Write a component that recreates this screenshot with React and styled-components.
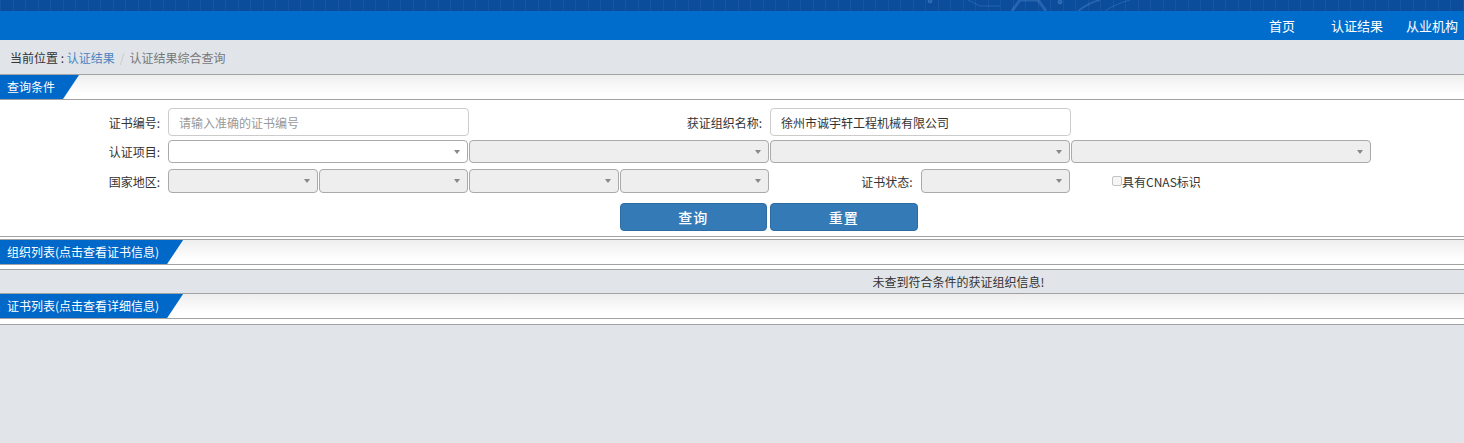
import React from 'react';
import styled, { createGlobalStyle } from 'styled-components';

const GlobalStyle = createGlobalStyle`
  html, body {
    margin: 0;
    padding: 0;
    background: #e1e5e9;
  }
  body {
    font-family: "Noto Sans CJK SC", "Noto Sans", sans-serif;
    font-size: 12px;
    color: #333;
  }
  * {
    box-sizing: border-box;
  }
`;

const Page = styled.div`
    width: 1464px;
    min-height: 443px;
    background: #e1e5e9;
`;

const TopStrip = styled.div`
    height: 11px;
    background-color: #0b4c9b;
    background-image: repeating-linear-gradient(
        90deg,
        rgba(255, 255, 255, 0.05) 0px,
        rgba(255, 255, 255, 0.05) 1px,
        transparent 1px,
        transparent 12.5px
    );
    overflow: hidden;

    svg {
        display: block;
    }
`;

const NavBar = styled.div`
    height: 29px;
    background: #006dcc;
    display: flex;
    justify-content: flex-end;
    align-items: center;
    gap: 23px;
    padding-right: 6px;
`;

const NavLink = styled.a`
    min-width: 52px;
    text-align: center;
    color: #fff;
    font-size: 13px;
    line-height: 29px;
    text-decoration: none;
`;

const Breadcrumb = styled.div`
    height: 34px;
    display: flex;
    align-items: center;
    padding-left: 10px;
    font-size: 12px;
`;

const CrumbLabel = styled.span`
    color: #333;
`;

const CrumbLink = styled.a`
    color: #4a85c3;
    text-decoration: none;
`;

const CrumbSep = styled.span`
    color: #c8c8c8;
    padding: 0 5px;
`;

const CrumbCurrent = styled.span`
    color: #777;
`;

const SectionHeader = styled.div`
    height: 26px;
    border-top: 1px solid #a2a2a2;
    border-bottom: 1px solid #a2a2a2;
    background: linear-gradient(#eeeeee, #ffffff 80%);
    display: flex;
`;

const Tag = styled.div`
    height: 24px;
    line-height: 24px;
    padding: 0 24px 0 7px;
    background: #0068c9;
    color: #fff;
    font-size: 12px;
    clip-path: polygon(0 0, 100% 0, calc(100% - 16px) 100%, 0 100%);
`;

const Spacer = styled.div`
    height: ${p => p.$h}px;
    background: #fff;
    border-bottom: ${p => (p.$line ? '1px solid #a2a2a2' : 'none')};
    box-sizing: content-box;
`;

const FormBody = styled.div`
    background: #fff;
    padding: 8px 0 5px;
    border-bottom: 1px solid #a2a2a2;
`;

const FormRow = styled.div`
    display: grid;
    grid-template-columns: 168px repeat(8, 150.5px);
    height: ${p => p.$h}px;
    margin-top: ${p => p.$mt || 0}px;
`;

const Label = styled.div`
    grid-column: span ${p => p.$span || 1};
    display: flex;
    align-items: center;
    justify-content: flex-end;
    padding-right: 8px;
    color: #333;
    font-size: 12px;
`;

const Blank = styled.div`
    grid-column: span ${p => p.$span || 1};
`;

const TextInput = styled.input`
    grid-column: span 2;
    height: 28px;
    border: 1px solid #ccc;
    border-radius: 4px;
    padding: 0 10px;
    font-family: inherit;
    font-size: 12px;
    color: #333;
    background: #fff;
    outline: none;

    &::placeholder {
        color: #999;
    }
`;

const SelectBox = styled.div`
    grid-column: span ${p => p.$span || 1};
    margin-right: 1px;
    border: 1px solid #aaa;
    border-radius: 4px;
    background: ${p => (p.$disabled ? '#eee' : '#fff')};
    display: flex;
    align-items: center;
    justify-content: flex-end;
    padding-right: 7px;
`;

const Arrow = styled.span`
    width: 0;
    height: 0;
    border-left: 3.5px solid transparent;
    border-right: 3.5px solid transparent;
    border-top: 4px solid #888;
`;

const CheckWrap = styled.label`
    display: flex;
    align-items: center;
    padding-left: 41px;
    font-size: 12px;
    color: #333;
    white-space: nowrap;
`;

const CheckBox = styled.span`
    width: 10px;
    height: 10px;
    border: 1px solid #c4c4c4;
    border-radius: 2px;
    background: #f6f6f6;
`;

const Button = styled.button`
    margin-right: 3px;
    height: 28px;
    background: #337ab7;
    border: 1px solid #2e6da4;
    border-radius: 4px;
    color: #fff;
    font-family: inherit;
    font-size: 14px;
    font-weight: 500;
    letter-spacing: 1px;
    cursor: pointer;
`;

const MessageRow = styled.div`
    height: 23px;
    line-height: 23px;
    padding-left: 453px;
    text-align: center;
    color: #333;
    font-size: 12px;
`;

function Select({ span, disabled }) {
    return (
        <SelectBox $span={span} $disabled={disabled}>
            <Arrow />
        </SelectBox>
    );
}

export default function App() {
    return (
        <Page>
            <GlobalStyle />
            <TopStrip>
                <svg width="1464" height="11" viewBox="0 0 1464 11">
                    <g fill="none" stroke="rgba(120,170,230,0.25)" strokeWidth="1">
                        <circle cx="930" cy="1" r="2" fill="rgba(120,170,230,0.25)" />
                        <path d="M968 0 L980 6 L1000 6" />
                        <path d="M1012 11 L1020 0 L1038 0 L1046 11" strokeWidth="3" />
                        <circle cx="1060" cy="2" r="2" fill="rgba(120,170,230,0.25)" />
                        <path d="M1078 11 Q1090 2 1100 0" strokeWidth="2" />
                        <path d="M1105 11 Q1115 4 1130 0" />
                    </g>
                </svg>
            </TopStrip>
            <NavBar>
                <NavLink>首页</NavLink>
                <NavLink>认证结果</NavLink>
                <NavLink>从业机构</NavLink>
            </NavBar>
            <Breadcrumb>
                <CrumbLabel>当前位置 :&nbsp;</CrumbLabel>
                <CrumbLink>认证结果</CrumbLink>
                <CrumbSep>/</CrumbSep>
                <CrumbCurrent>认证结果综合查询</CrumbCurrent>
            </Breadcrumb>

            <SectionHeader>
                <Tag>查询条件</Tag>
            </SectionHeader>
            <FormBody>
                <FormRow $h={28}>
                    <Label>证书编号:</Label>
                    <TextInput placeholder="请输入准确的证书编号" />
                    <Label $span={2}>获证组织名称:</Label>
                    <TextInput defaultValue="徐州市诚宇轩工程机械有限公司" />
                </FormRow>
                <FormRow $h={23} $mt={4}>
                    <Label>认证项目:</Label>
                    <Select span={2} />
                    <Select span={2} disabled />
                    <Select span={2} disabled />
                    <Select span={2} disabled />
                </FormRow>
                <FormRow $h={24} $mt={6}>
                    <Label>国家地区:</Label>
                    <Select disabled />
                    <Select disabled />
                    <Select disabled />
                    <Select disabled />
                    <Label>证书状态:</Label>
                    <Select disabled />
                    <CheckWrap>
                        <CheckBox />
                        具有CNAS标识
                    </CheckWrap>
                </FormRow>
                <FormRow $h={28} $mt={10}>
                    <Blank $span={4} />
                    <Button>查询</Button>
                    <Button>重置</Button>
                </FormRow>
            </FormBody>
            <Spacer $h={2} />

            <SectionHeader>
                <Tag>组织列表(点击查看证书信息)</Tag>
            </SectionHeader>
            <Spacer $h={4} $line />
            <MessageRow>未查到符合条件的获证组织信息!</MessageRow>

            <SectionHeader>
                <Tag>证书列表(点击查看详细信息)</Tag>
            </SectionHeader>
            <Spacer $h={5} $line />
        </Page>
    );
}
